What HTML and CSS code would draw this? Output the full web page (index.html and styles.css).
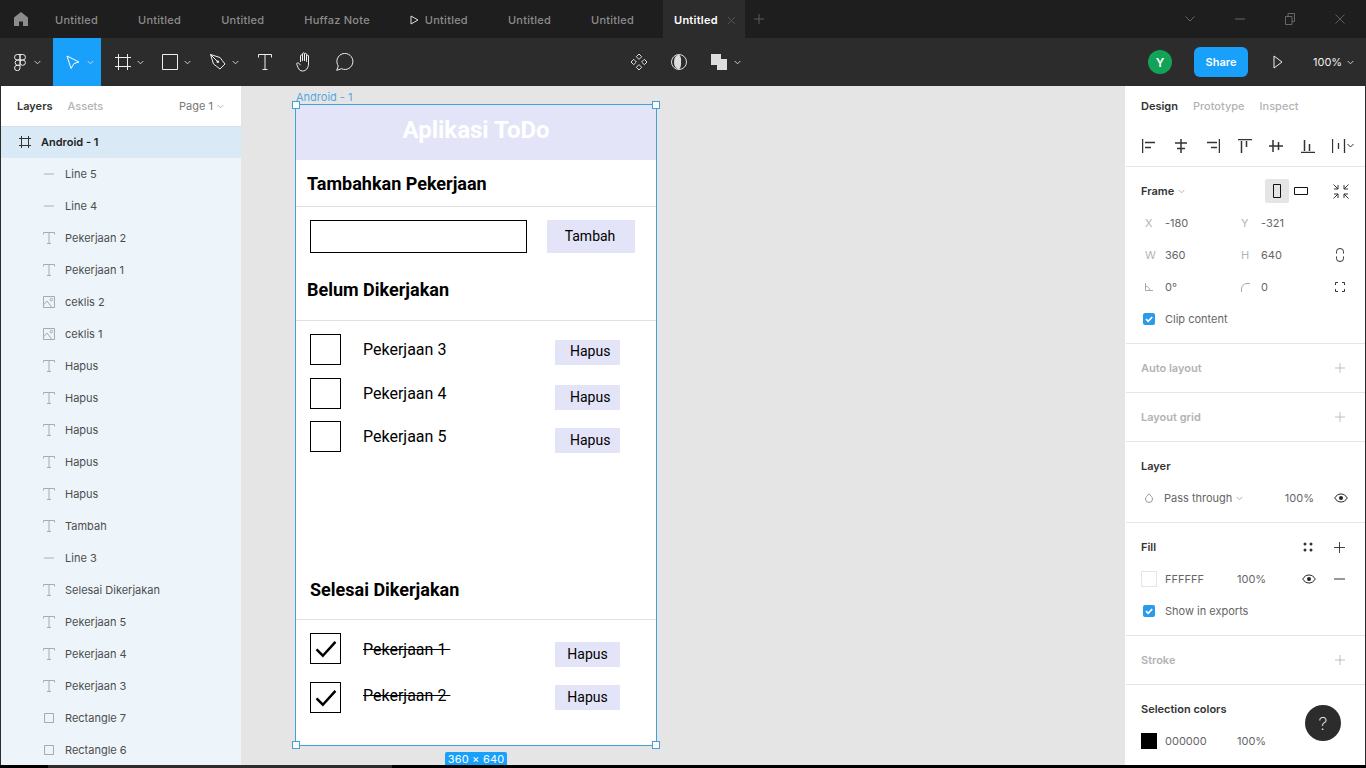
FILE: index.html
```html
<!DOCTYPE html>
<html lang="id">
<head>
<meta charset="utf-8">
<title>Untitled – Figma</title>
<link rel="stylesheet" href="styles.css">
</head>
<body>
<svg class="defs" width="0" height="0" aria-hidden="true">
  <symbol id="chev" viewBox="0 0 8 5"><path d="M.8.8 4 4l3.2-3.2" fill="none" stroke="currentColor"/></symbol>
  <symbol id="i-text" viewBox="0 0 12 12"><path d="M.5 2.500V.5h11v2M6 .5v11M4 11.500h4" fill="none" stroke="currentColor"/></symbol>
  <symbol id="i-line" viewBox="0 0 12 12"><path d="M1 6h10" fill="none" stroke="#c6c9cc" stroke-width="1.600"/></symbol>
  <symbol id="i-img" viewBox="0 0 12 12"><path d="M.5.5h11v11H.5zM.5 9 4 5l5 6.500" fill="none" stroke="currentColor"/><circle cx="8.300" cy="3.600" r="1.300" fill="none" stroke="currentColor"/></symbol>
  <symbol id="i-rect" viewBox="0 0 12 12"><path d="M1.500 1.500h9v9h-9z" fill="none" stroke="currentColor"/></symbol>
  <symbol id="plus" viewBox="0 0 12 12"><path d="M6 0v12M0 6h12" fill="none" stroke="currentColor"/></symbol>
  <symbol id="eye" viewBox="0 0 14 10"><path d="M.7 5C2.300 2.400 4.400 1 7 1s4.700 1.400 6.300 4C11.700 7.600 9.600 9 7 9S2.300 7.600.7 5z" fill="none" stroke="currentColor"/><circle cx="7" cy="5" r="2" fill="currentColor"/></symbol>
  <symbol id="tick" viewBox="0 0 12 12"><rect width="12" height="12" rx="2" fill="#2a9bea"/><path d="M3 6.200 5.200 8.300 9.200 4" fill="none" stroke="#fff" stroke-width="1.700"/></symbol>
  <symbol id="check" viewBox="0 0 24 20"><path d="M1.500 10.500 8.500 17.500 22.500 2" fill="none" stroke="#000" stroke-width="2.800"/></symbol>
</svg>

<header class="tabbar">
  <svg class="home" width="14" height="14" viewBox="0 0 14 14"><path d="M7 0 14 5.500V14H9V9.500H5V14H0V5.500z" fill="#8c8c8c"/></svg>
  <nav class="tabs">
    <span class="tab">Untitled</span>
    <span class="tab">Untitled</span>
    <span class="tab">Untitled</span>
    <span class="tab">Huffaz Note</span>
    <span class="tab"><svg class="tab-play" width="9" height="10" viewBox="0 0 9 10"><path d="M1 1v8l7-4z" fill="none" stroke="#ddd"/></svg>Untitled</span>
    <span class="tab">Untitled</span>
    <span class="tab">Untitled</span>
    <span class="tab tab-active">Untitled<svg class="tab-x" width="9" height="9" viewBox="0 0 9 9"><path d="M1 1l7 7M8 1 1 8" stroke="#555" fill="none"/></svg></span>
    <svg class="tab-plus" width="10" height="10" viewBox="0 0 12 12"><use href="#plus"/></svg>
  </nav>
  <div class="win">
    <svg width="10" height="6" viewBox="0 0 10 6"><path d="M.5.500 5 5 9.500.500" fill="none" stroke="#666"/></svg>
    <svg width="10" height="2" viewBox="0 0 10 2"><path d="M0 1h10" stroke="#666"/></svg>
    <svg width="10" height="12" viewBox="0 0 10 12"><path d="M.5 3.500h6.500v8H.5zM3 3.500V.5h6.500v8H7" fill="none" stroke="#666"/></svg>
    <svg width="10" height="10" viewBox="0 0 11 11"><path d="M.5.500l10 10M10.500.500l-10 10" stroke="#666" fill="none"/></svg>
  </div>
</header>

<div class="toolbar">
  <div class="tools">
    <div class="tool tool-logo">
      <svg width="12" height="17" viewBox="0 0 12 17"><g fill="none" stroke="#eee"><path d="M6 .5H3.300a2.700 2.700 0 0 0 0 5.500H6zM6 .5h2.700a2.700 2.700 0 0 1 0 5.500H6zM6 6H3.300a2.700 2.700 0 0 0 0 5.300H6zM6 11.300H3.300A2.700 2.700 0 1 0 6 14z"/><circle cx="8.700" cy="8.600" r="2.700"/></g></svg>
      <svg class="chev" width="7" height="5"><use href="#chev"/></svg>
    </div>
    <div class="tool tool-on">
      <svg width="14" height="15" viewBox="0 0 14 15"><path d="M1 1l12 6-5 1.500L5 13.500z" fill="none" stroke="#fff"/></svg>
      <svg class="chev" width="7" height="5"><use href="#chev"/></svg>
    </div>
    <div class="tool tool-frame">
      <svg width="16" height="16" viewBox="0 0 16 16"><path d="M3.500 0v16M12.500 0v16M0 3.500h16M0 12.500h16" stroke="#eee" fill="none"/></svg>
      <svg class="chev" width="7" height="5"><use href="#chev"/></svg>
    </div>
    <div class="tool">
      <svg width="16" height="16" viewBox="0 0 16 16"><path d="M.5.500h15v15H.5z" stroke="#eee" fill="none"/></svg>
      <svg class="chev" width="7" height="5"><use href="#chev"/></svg>
    </div>
    <div class="tool">
      <svg width="16" height="16" viewBox="0 0 16 16"><path d="M.5.500 10 3.500c1.500 2 3 4 5 6.500l-5 5c-2.500-2-4.500-3.500-6.500-5z" stroke="#eee" fill="none"/><circle cx="7.800" cy="7.800" r="1.300" fill="#eee"/><path d="M.5.500l6.500 6.500" stroke="#eee"/></svg>
      <svg class="chev" width="7" height="5"><use href="#chev"/></svg>
    </div>
    <div class="tool tool-s">
      <svg width="14" height="16" viewBox="0 0 14 16"><path d="M.5 3.500V.5h13v3M7 .5v15M4.500 15.500h5" stroke="#eee" fill="none"/></svg>
    </div>
    <div class="tool tool-s">
      <svg width="18" height="20" viewBox="0 0 18 20"><path d="M4.500 10V3.800c0-1.300 2-1.300 2 0V9M6.500 9V1.800c0-1.300 2-1.300 2 0V9M8.500 9V2.300c0-1.300 2-1.300 2 0V9.500M10.500 9.500V4c0-1.300 2-1.300 2 0v8c0 4-2.500 7-6 7-2.500 0-3.500-1.500-4.500-3.500L.8 12.500c-.5-1.300 1-2.300 2-1.300l1.700 2" fill="none" stroke="#eee"/></svg>
    </div>
    <div class="tool tool-s">
      <svg width="18" height="18" viewBox="0 0 18 18"><path d="M.7 17.300 2.300 13A8 8 0 1 1 5.500 15.700z" fill="none" stroke="#eee"/></svg>
    </div>
  </div>
  <div class="tools-mid">
    <div class="tool tool-s">
      <svg width="18" height="18" viewBox="0 0 18 18"><g fill="none" stroke="#ddd"><path d="M9 1l2.700 2.700L9 6.400 6.300 3.700zM9 11.600l2.700 2.700L9 17l-2.700-2.700zM3.700 6.300 6.400 9l-2.700 2.700L1 9zM14.300 6.300 17 9l-2.700 2.700L11.600 9z"/></g></svg>
    </div>
    <div class="tool tool-s">
      <svg width="16" height="16" viewBox="0 0 16 16"><circle cx="8" cy="8" r="7.500" fill="none" stroke="#ddd"/><path d="M8 .5a6.500 7.500 0 0 0-5 7.500 6.500 7.500 0 0 0 5 7.500 5 7.500 0 0 0 2-7.500A5 7.500 0 0 0 8 .5z" fill="#ddd"/></svg>
    </div>
    <div class="tool tool-bool">
      <svg width="16" height="16" viewBox="0 0 16 16"><path d="M0 0h10v5h6v11H6v-5H0z" fill="#ddd"/></svg>
      <svg class="chev" width="7" height="5"><use href="#chev"/></svg>
    </div>
  </div>
  <div class="tools-right">
    <span class="avatar">Y</span>
    <span class="share">Share</span>
    <svg class="present" width="10" height="14" viewBox="0 0 10 14"><path d="M1 1v12l8-6z" fill="none" stroke="#eee"/></svg>
    <span class="zoom">100%</span>
    <svg class="chev" width="7" height="5"><use href="#chev"/></svg>
  </div>
</div>

<main class="workspace">
  <aside class="layers">
    <div class="layers-head">
      <span class="lh-on">Layers</span>
      <span class="lh-off">Assets</span>
      <span class="lh-page">Page 1<svg class="chev" width="7" height="5"><use href="#chev"/></svg></span>
    </div>
    <ul class="layer-list">
      <li class="layer layer-root"><svg width="12" height="12" viewBox="0 0 12 12"><path d="M2.500 0v12M9.500 0v12M0 2.500h12M0 9.500h12" stroke="#333" fill="none"/></svg>Android - 1</li>
      <li class="layer"><svg width="12" height="12"><use href="#i-line"/></svg>Line 5</li>
      <li class="layer"><svg width="12" height="12"><use href="#i-line"/></svg>Line 4</li>
      <li class="layer"><svg width="12" height="12"><use href="#i-text"/></svg>Pekerjaan 2</li>
      <li class="layer"><svg width="12" height="12"><use href="#i-text"/></svg>Pekerjaan 1</li>
      <li class="layer"><svg width="12" height="12"><use href="#i-img"/></svg>ceklis 2</li>
      <li class="layer"><svg width="12" height="12"><use href="#i-img"/></svg>ceklis 1</li>
      <li class="layer"><svg width="12" height="12"><use href="#i-text"/></svg>Hapus</li>
      <li class="layer"><svg width="12" height="12"><use href="#i-text"/></svg>Hapus</li>
      <li class="layer"><svg width="12" height="12"><use href="#i-text"/></svg>Hapus</li>
      <li class="layer"><svg width="12" height="12"><use href="#i-text"/></svg>Hapus</li>
      <li class="layer"><svg width="12" height="12"><use href="#i-text"/></svg>Hapus</li>
      <li class="layer"><svg width="12" height="12"><use href="#i-text"/></svg>Tambah</li>
      <li class="layer"><svg width="12" height="12"><use href="#i-line"/></svg>Line 3</li>
      <li class="layer"><svg width="12" height="12"><use href="#i-text"/></svg>Selesai Dikerjakan</li>
      <li class="layer"><svg width="12" height="12"><use href="#i-text"/></svg>Pekerjaan 5</li>
      <li class="layer"><svg width="12" height="12"><use href="#i-text"/></svg>Pekerjaan 4</li>
      <li class="layer"><svg width="12" height="12"><use href="#i-text"/></svg>Pekerjaan 3</li>
      <li class="layer"><svg width="12" height="12"><use href="#i-rect"/></svg>Rectangle 7</li>
      <li class="layer"><svg width="12" height="12"><use href="#i-rect"/></svg>Rectangle 6</li>
    </ul>
  </aside>

  <section class="canvas">
    <span class="frame-name">Android - 1</span>
    <div class="frame">
      <div class="app-head">Aplikasi ToDo</div>
      <h2 class="app-title app-title-add">Tambahkan Pekerjaan</h2>
      <div class="add-row">
        <div class="add-input"></div>
        <div class="add-btn">Tambah</div>
      </div>
      <h2 class="app-title app-title-todo">Belum Dikerjakan</h2>
      <div class="todo todo-a"><div class="box"></div><span class="label">Pekerjaan 3</span><span class="hapus hapus-left hapus-6">Hapus</span></div>
      <div class="todo todo-a"><div class="box"></div><span class="label">Pekerjaan 4</span><span class="hapus hapus-left hapus-7">Hapus</span></div>
      <div class="todo todo-b"><div class="box"></div><span class="label">Pekerjaan 5</span><span class="hapus hapus-left hapus-7">Hapus</span></div>
      <h2 class="app-title app-title-done">Selesai Dikerjakan</h2>
      <div class="todo todo-a"><div class="box"><svg class="check" width="22" height="18" viewBox="0 0 24 20"><use href="#check"/></svg></div><span class="label label-done label-up">Pekerjaan 1 </span><span class="hapus hapus-9">Hapus</span></div>
      <div class="todo todo-c"><div class="box"><svg class="check" width="22" height="18" viewBox="0 0 24 20"><use href="#check"/></svg></div><span class="label label-done label-dn">Pekerjaan 2 </span><span class="hapus hapus-3">Hapus</span></div>
    </div>
    <span class="handle handle-tl"></span>
    <span class="handle handle-tr"></span>
    <span class="handle handle-bl"></span>
    <span class="handle handle-br"></span>
    <span class="size-badge">360 × 640</span>
  </section>

  <aside class="props">
    <div class="props-tabs">
      <span class="pt-on">Design</span><span class="pt-off">Prototype</span><span class="pt-off">Inspect</span>
    </div>
    <div class="align-row">
      <svg width="14" height="14" viewBox="0 0 14 14"><path d="M.5 0v14M3 3.500h10M3 8.500h6" stroke="#333" stroke-width="1.500" fill="none"/></svg>
      <svg width="14" height="14" viewBox="0 0 14 14"><path d="M7 0v14M1 4h12M3 9.500h8" stroke="#333" stroke-width="1.500" fill="none"/></svg>
      <svg width="14" height="14" viewBox="0 0 14 14"><path d="M13.500 0v14M1 3.500h10M5 8.500h6" stroke="#333" stroke-width="1.500" fill="none"/></svg>
      <svg width="14" height="14" viewBox="0 0 14 14"><path d="M0 .5h14M3.500 2v12M8.500 2v6" stroke="#333" stroke-width="1.500" fill="none"/></svg>
      <svg class="al-mid" width="14" height="14" viewBox="0 0 14 14"><path d="M0 7h14M4 1v12M9.500 3v8" stroke="#333" stroke-width="1.500" fill="none"/></svg>
      <svg width="14" height="14" viewBox="0 0 14 14"><path d="M0 13.500h14M3.500 1v11M8.500 5v7" stroke="#333" stroke-width="1.500" fill="none"/></svg>
      <svg class="dist" width="22" height="14" viewBox="0 0 22 14"><path d="M.5 0v14M12.500 0v14M6.500 4v6" stroke="#333" stroke-width="1.300" fill="none"/><path d="M15.500 5 18.500 8l3-3" stroke="#333" fill="none"/></svg>
    </div>

    <div class="sec sec-frame">
      <div class="frame-head">
        <span class="sec-name">Frame<svg class="chev" width="7" height="5"><use href="#chev"/></svg></span>
        <span class="portrait"><svg width="8" height="14" viewBox="0 0 8 14"><path d="M.5.500h7v13h-7z" fill="none" stroke="#111"/></svg></span>
        <svg class="landscape" width="14" height="8" viewBox="0 0 14 8"><path d="M.5.500h13v7H.5z" fill="none" stroke="#111"/></svg>
        <svg class="shrink" width="16" height="15" viewBox="0 0 16 15"><path d="M.5.500 5 5M1 5h4V1M15.500.500 11 5M15 5h-4V1M.5 14.500 5 10M1 10h4v4M15.500 14.500 11 10M15 10h-4v4" fill="none" stroke="#333"/></svg>
      </div>
      <div class="field-row"><span class="f-lab">X</span><span class="f-val">-180</span><span class="f-lab">Y</span><span class="f-val">-321</span></div>
      <div class="field-row"><span class="f-lab">W</span><span class="f-val">360</span><span class="f-lab">H</span><span class="f-val">640</span>
        <svg class="f-ico" width="8" height="14" viewBox="0 0 8 14"><path d="M.5 5.500V3.500a3.500 3 0 0 1 7 0v2M.5 8.500v2a3.500 3 0 0 0 7 0v-2" fill="none" stroke="#333"/></svg></div>
      <div class="field-row"><span class="f-lab"><svg width="8" height="8" viewBox="0 0 8 8"><path d="M.5 0v7.500H8M.5 3C3 3.500 4.500 5 5 7.500" fill="none" stroke="#aaa"/></svg></span><span class="f-val">0°</span><span class="f-lab"><svg width="9" height="9" viewBox="0 0 9 9"><path d="M.5 9V6A5.500 5.500 0 0 1 6 .5h3" fill="none" stroke="#aaa"/></svg></span><span class="f-val">0</span>
        <svg class="f-ico f-ico-wide" width="10" height="10" viewBox="0 0 10 10"><path d="M.5 3V.5H3M7 .5h2.500V3M9.500 7v2.500H7M3 9.500H.5V7" fill="none" stroke="#333"/></svg></div>
      <div class="check-row"><svg width="12" height="12"><use href="#tick"/></svg>Clip content</div>
    </div>

    <div class="sec sec-empty"><span class="sec-name sec-off">Auto layout</span><svg class="sec-plus" width="10" height="10" viewBox="0 0 12 12"><use href="#plus"/></svg></div>
    <div class="sec sec-empty"><span class="sec-name sec-off">Layout grid</span><svg class="sec-plus" width="10" height="10" viewBox="0 0 12 12"><use href="#plus"/></svg></div>

    <div class="sec sec-layer">
      <div class="sec-head"><span class="sec-name">Layer</span></div>
      <div class="layer-row">
        <svg class="drop" width="8" height="10" viewBox="0 0 8 10"><path d="M4 .8C5.500 2.500 7.500 4 7.500 6a3.500 3.500 0 0 1-7 0C.5 4 2.500 2.500 4 .8z" fill="none" stroke="#999"/></svg>
        <span class="blend">Pass through<svg class="chev" width="7" height="5"><use href="#chev"/></svg></span>
        <span class="pct">100%</span>
        <svg class="eye" width="14" height="10"><use href="#eye"/></svg>
      </div>
    </div>

    <div class="sec sec-fill">
      <div class="sec-head"><span class="sec-name">Fill</span>
        <svg class="dots" width="10" height="10" viewBox="0 0 10 10"><g fill="#333"><circle cx="2" cy="2" r="1.500"/><circle cx="8" cy="2" r="1.500"/><circle cx="2" cy="8" r="1.500"/><circle cx="8" cy="8" r="1.500"/></g></svg>
        <svg class="head-plus" width="11" height="11" viewBox="0 0 12 12"><use href="#plus"/></svg></div>
      <div class="paint-row">
        <span class="swatch swatch-white"></span><span class="hex">FFFFFF</span><span class="hex-pct">100%</span>
        <svg class="eye paint-eye" width="14" height="10"><use href="#eye"/></svg>
        <svg class="minus" width="11" height="2" viewBox="0 0 11 2"><path d="M0 1h11" stroke="#333"/></svg>
      </div>
      <div class="check-row"><svg width="12" height="12"><use href="#tick"/></svg>Show in exports</div>
    </div>

    <div class="sec sec-empty"><span class="sec-name sec-off">Stroke</span><svg class="sec-plus" width="10" height="10" viewBox="0 0 12 12"><use href="#plus"/></svg></div>

    <div class="sec sec-sel">
      <div class="sec-head"><span class="sec-name">Selection colors</span></div>
      <div class="paint-row">
        <span class="swatch swatch-black"></span><span class="hex">000000</span><span class="hex-pct">100%</span>
      </div>
    </div>
    <span class="help">?</span>
  </aside>
</main>
<div class="taskbar"><span class="tb-black"></span><span class="tb-gray"></span><span class="tb-black tb-grow"></span></div>
</body>
</html>
```
FILE: styles.css
```css
* { box-sizing: border-box; }
html, body { margin: 0; height: 100%; }
body {
  width: 1366px; height: 768px; overflow: hidden; background: #000;
  display: flex; flex-direction: column;
  font-family: Inter, "Liberation Sans", sans-serif; font-size: 11px; color: #333;
}
.defs { position: absolute; }
svg { display: block; flex: none; }

/* tab bar */
.tabbar { height: 38px; flex: none; background: #1e1e1e; display: flex; align-items: center; position: relative; }
.home { margin-left: 14px; }
.tabs { display: flex; align-items: center; height: 38px; padding-left: 7px; }
.tab { display: flex; align-items: center; padding: 2px 20px 0; color: #8c8c8c; font-weight: 500; letter-spacing: .25px; height: 38px; }
.tab-play { margin-right: 6px; }
.tab-active { background: #2c2c2c; color: #fff; margin-left: 9px; padding: 2px 9px 0 11px; font-weight: 600; }
.tab-x { margin-left: 9px; }
.tab-plus { color: #666; margin-left: 9px; }
.win { margin-left: auto; display: flex; align-items: center; gap: 40px; padding-right: 21px; height: 38px; }

/* tool bar */
.toolbar { height: 48px; flex: none; background: #2c2c2c; display: flex; align-items: stretch; color: #eee; }
.tools { display: flex; flex: 0 0 619px; padding-left: 1px; }
.tools-mid { display: flex; }
.tools-right { margin-left: auto; display: flex; align-items: center; padding-right: 12px; }
.tool { width: 48px; display: flex; align-items: center; padding-left: 13px; gap: 6px; position: relative; }
.tool .chev { color: #ddd; }
.tool-logo { width: 52px; gap: 8px; }
.tool-on { background: #18a0fb; gap: 7px; }
.tool-frame { padding-left: 14px; }
.tool-bool { width: 52px; padding-left: 12px; gap: 7px; }
.tool-s { width: 40px; padding-left: 0; justify-content: center; }
.avatar { width: 24px; height: 24px; border-radius: 50%; background: #13a358; color: #fff; font-weight: 600; font-size: 12px; display: flex; align-items: center; justify-content: center; }
.share { width: 54px; height: 30px; margin-left: 22px; background: #18a0fb; color: #fff; border-radius: 6px; font-weight: 600; display: flex; align-items: center; justify-content: center; }
.present { margin-left: 25px; }
.zoom { margin-left: 30px; color: #eee; font-weight: 400; width: 28px; white-space: nowrap; }
.tools-right .chev { margin-left: 6px; color: #ddd; }

/* workspace */
.workspace { height: 679px; flex: none; display: flex; background: #2c2c2c; padding: 0 1px; }
.layers { width: 240px; flex: none; background: #edf5fb; overflow: hidden; }
.layers-head { height: 40px; background: #fff; display: flex; align-items: center; padding: 0 17px 0 16px; font-weight: 500; }
.lh-on { color: #333; font-weight: 600; }
.lh-off { color: #b3b3b3; margin-left: 15px; }
.lh-page { margin-left: auto; display: flex; align-items: center; gap: 4px; color: #777; font-weight: 400; }
.lh-page .chev { color: #aaa; }
.layer-list { list-style: none; margin: 0; padding: 0; }
.layer { height: 32px; display: flex; align-items: center; padding-left: 42px; gap: 10px; color: #4d4d4d; }
.layer svg { color: #aaa; }
.layer-root { background: #d9e9f6; padding: 0 0 1px 18px; color: #222; font-weight: 600; border-top: 1px solid #cfe0ec; }

/* canvas */
.canvas { flex: none; width: 884px; background: #e5e5e5; position: relative; overflow: hidden; }
.frame-name { position: absolute; left: 55px; top: 4px; color: #55a8e2; line-height: 14px; }
.frame {
  position: absolute; left: 55px; top: 19px; width: 360px; height: 640px;
  background: #fff; outline: 1px solid #45a0d8;
  font-family: Roboto, "Liberation Sans", sans-serif; color: #000;
}
.handle { position: absolute; width: 8px; height: 8px; background: #fff; border: 1px solid #45a0d8; }
.handle-tl { left: 51px; top: 15px; }
.handle-tr { left: 411px; top: 15px; }
.handle-bl { left: 51px; top: 655px; }
.handle-br { left: 411px; top: 655px; }
.size-badge { position: absolute; left: 204px; top: 666px; width: 62px; height: 13px; padding-top: 2px; line-height: 11px; background: #18a0fb; color: #fff; border-radius: 2px 2px 0 0; text-align: center; letter-spacing: .2px; }

/* design content */
.app-head { height: 55px; background: #e3e4f7; color: #fff; font-weight: 700; font-size: 24px; display: flex; align-items: center; justify-content: center; padding-bottom: 5px; }
.app-title { margin: 0; font-size: 18px; font-weight: 700; line-height: 22px; border-bottom: 1px solid #e0e0e0; }
.app-title-add { height: 47px; padding: 13px 0 0 11px; }
.app-title-todo { height: 68px; padding: 26px 0 0 11px; }
.app-title-done { height: 168px; padding: 127px 0 0 14px; }
.add-row { display: flex; padding: 13px 0 0 14px; gap: 20px; height: 46px; }
.add-input { width: 217px; height: 33px; border: 1px solid #000; }
.add-btn { width: 88px; height: 33px; background: #e3e4f7; font-size: 14px; display: flex; align-items: center; justify-content: center; padding: 0 2px 1px 0; }
.todo { display: grid; grid-template-columns: 31px 192px 87px; height: 31px; margin-left: 14px; align-items: start; }
.todo-a { margin-top: 13px; }
.todo-b { margin-top: 12px; }
.todo-c { margin-top: 18px; }
.box { width: 31px; height: 31px; border: 1px solid #000; display: flex; align-items: center; justify-content: center; }
.label { font-size: 16px; line-height: 31px; margin-left: 22px; white-space: pre; justify-self: start; }
.label-done { text-decoration: line-through; }
.label-up { margin-top: 1px; }
.label-dn { margin-top: -2px; }
.hapus { grid-column: 3; height: 25px; background: #e3e4f7; font-size: 14px; line-height: 25px; text-align: center; margin-left: 22px; width: 65px; }
.hapus-left { text-align: left; padding-left: 15px; }
.hapus-3 { margin-top: 3px; }
.hapus-6 { margin-top: 6px; line-height: 23px; }
.hapus-7 { margin-top: 7px; }
.hapus-9 { margin-top: 9px; }

/* properties */
.props { flex: none; width: 240px; background: #fff; border-left: 1px solid #fff; position: relative; overflow: hidden; }
.props-tabs { height: 40px; display: flex; align-items: center; padding-left: 15px; gap: 15px; }
.pt-on { font-weight: 600; color: #333; }
.pt-off { font-weight: 500; color: #b3b3b3; }
.align-row { height: 41px; display: flex; align-items: center; padding: 0 16px; gap: 18px; border-bottom: 1px solid #e5e5e5; }
.al-mid { margin-left: -1px; }
.dist { margin-left: -1px; }
.sec { border-bottom: 1px solid #e5e5e5; }
.sec-name { font-weight: 600; color: #333; display: flex; align-items: center; gap: 4px; }
.sec-name .chev { color: #aaa; }
.sec-off { color: #b3b3b3; }
.sec-frame { height: 177px; padding-top: 8px; }
.frame-head { height: 32px; display: flex; align-items: center; padding-left: 15px; position: relative; }
.portrait { position: absolute; left: 139px; top: 4px; width: 24px; height: 24px; background: #e5e5e5; border-radius: 2px; display: flex; align-items: center; justify-content: center; }
.landscape { position: absolute; left: 168px; top: 12px; }
.shrink { position: absolute; left: 207px; top: 9px; }
.field-row { height: 32px; display: grid; grid-template-columns: 20px 76px 20px 75px auto; align-items: center; padding-left: 19px; color: #666; }
.f-lab { color: #b3b3b3; }
.f-ico { justify-self: start; }
.f-ico-wide { margin-left: -1px; }
.check-row { height: 32px; display: flex; align-items: center; gap: 10px; padding-left: 17px; color: #666; }
.sec-empty { height: 49px; display: flex; align-items: center; justify-content: space-between; padding: 0 20px 0 15px; }
.sec-plus { color: #b3b3b3; }
.sec-layer { height: 81px; padding-top: 8px; }
.sec-head { height: 32px; display: flex; align-items: center; padding-left: 15px; position: relative; }
.layer-row { height: 32px; display: flex; align-items: center; padding-left: 19px; color: #666; position: relative; }
.drop { margin-right: 11px; }
.blend { display: flex; align-items: center; gap: 4px; }
.blend .chev { color: #aaa; }
.pct { margin-left: auto; margin-right: 20px; }
.eye { color: #222; }
.layer-row .eye { margin-right: 17px; }
.sec-fill { height: 113px; padding-top: 8px; }
.dots { position: absolute; left: 177px; top: 11px; }
.head-plus { position: absolute; left: 208px; top: 11px; color: #333; }
.paint-row { height: 32px; display: flex; align-items: center; padding-left: 15px; color: #666; position: relative; }
.swatch { width: 16px; height: 16px; margin-right: 8px; }
.swatch-white { background: #fff; border: 1px solid #e5e5e5; }
.swatch-black { background: #000; }
.hex { width: 72px; }
.paint-eye { position: absolute; left: 176px; top: 11px; }
.minus { position: absolute; left: 208px; top: 15px; }
.sec-sel { border-bottom: 0; padding-top: 8px; }
.help { position: absolute; left: 179px; top: 619px; width: 36px; height: 36px; border-radius: 50%; background: #2c2c2c; color: #fff; font-size: 18px; font-weight: 200; display: flex; align-items: center; justify-content: center; }

/* bottom strip */
.taskbar { flex: 1; display: flex; }
.tb-black { width: 48px; background: #000; }
.tb-gray { width: 344px; background: #2c2c2c; }
.tb-grow { flex: 1; }
```
